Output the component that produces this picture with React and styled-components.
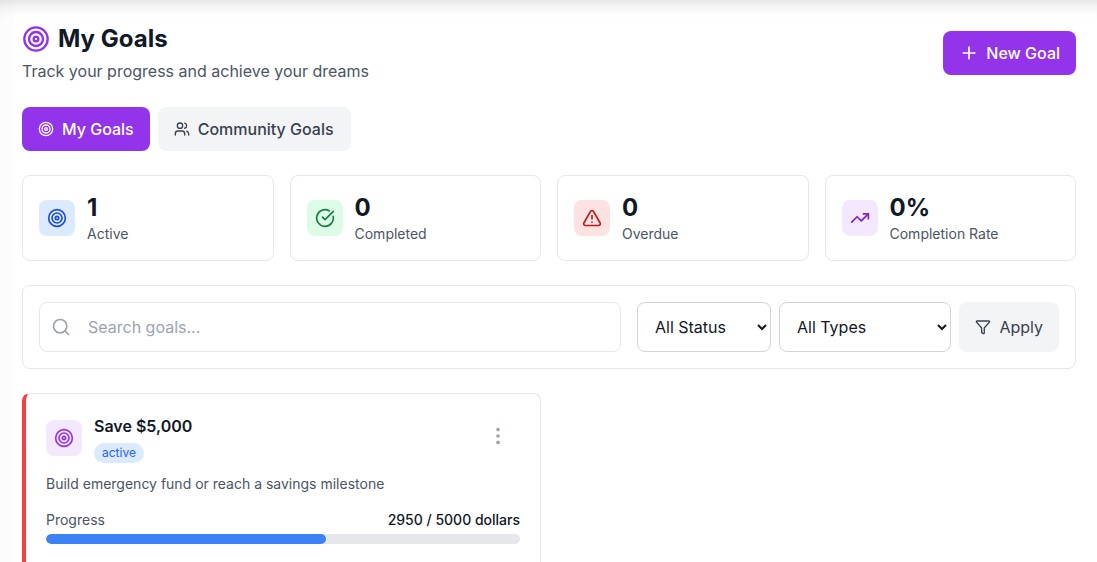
import React from 'react';
import styled, { createGlobalStyle } from 'styled-components';
import { Target, Plus, Users, CircleCheckBig, TriangleAlert, TrendingUp, Search, Filter, EllipsisVertical } from 'lucide-react';

const Global = createGlobalStyle`
  * { box-sizing: border-box; }
  html, body { margin: 0; height: 562px; overflow: hidden; background: #fff; }
  body { font-family: Inter, "Liberation Sans", sans-serif; color: #111827; }
`;

const Page = styled.div`
  height: 562px;
  overflow: hidden;
  position: relative;
  background: linear-gradient(90deg, #fbfbfb, #fdfdfd 14px, #fff 16px);
  padding: 12px 0 0 14px;
  &::before {
    content: '';
    position: absolute;
    z-index: 2;
    left: 0; right: 0; top: 0; height: 20px;
    background: linear-gradient(rgba(0,0,0,0.09), rgba(0,0,0,0.035) 40%, rgba(0,0,0,0.01) 70%, rgba(0,0,0,0));
  }
`;

const Main = styled.main`
  background: #fff;
  height: 100%;
  padding: 13px 21px 0 8px;
  position: relative;
`;

const Header = styled.header`
  display: flex;
  justify-content: space-between;
  align-items: flex-start;
  margin-bottom: 24px;
`;

const TitleRow = styled.h1`
  display: flex;
  align-items: center;
  gap: 8px;
  margin: 0 0 6px;
  font-size: 24px;
  line-height: 28px;
  font-weight: 700;
  color: #111827;
  svg { color: #9333ea; }
`;

const Subtitle = styled.p`
  margin: 0;
  font-size: 16px;
  line-height: 24px;
  color: #4b5563;
`;

const Button = styled.button`
  display: inline-flex;
  align-items: center;
  border: 0;
  font-family: inherit;
  font-weight: 500;
  font-size: 16px;
  white-space: nowrap;
  border-radius: 8px;
  height: 44px;
  padding: 0 16px;
  gap: 8px;
  background: ${p => (p.$primary ? '#9333ea' : '#f3f4f6')};
  color: ${p => (p.$primary ? '#ffffff' : '#374151')};
`;

const NewGoal = styled(Button)`
  margin-top: 6px;
  gap: 7px;
`;

const CommunityTab = styled(Button)`
  padding-right: 17px;
`;

const Tabs = styled.nav`
  display: flex;
  gap: 8px;
  margin-bottom: 24px;
`;

const Stats = styled.section`
  display: grid;
  grid-template-columns: repeat(4, 1fr);
  gap: 16px;
  margin-bottom: 24px;
`;

const StatCard = styled.div`
  display: flex;
  align-items: center;
  gap: 12px;
  height: 86px;
  padding: 0 16px;
  background: #fff;
  border: 1px solid #e5e7eb;
  border-radius: 8px;
`;

const IconBox = styled.div`
  width: 36px;
  height: 36px;
  flex: none;
  display: flex;
  align-items: center;
  justify-content: center;
  border-radius: 8px;
  background: ${p => p.$bg};
  color: ${p => p.$fg};
`;

const StatValue = styled.div`
  font-size: 24px;
  line-height: 32px;
  font-weight: 700;
  color: #111827;
`;

const StatLabel = styled.div`
  font-size: 14px;
  line-height: 20px;
  color: #4b5563;
`;

const FilterBar = styled.section`
  display: flex;
  gap: 8px;
  align-items: center;
  height: 84px;
  padding: 0 16px;
  border: 1px solid #e5e7eb;
  border-radius: 8px;
  margin-bottom: 24px;
`;

const SearchWrap = styled.div`
  flex: 1;
  position: relative;
  margin-right: 8px;
  height: 50px;
  svg {
    position: absolute;
    left: 12px;
    top: 15px;
    color: #9ca3af;
  }
`;

const SearchInput = styled.input`
  width: 100%;
  height: 100%;
  border: 1px solid #e5e7eb;
  border-radius: 8px;
  padding: 0 16px 0 48px;
  font-family: inherit;
  font-size: 16px;
  outline: none;
  &::placeholder { color: #9ca3af; opacity: 1; }
`;

const Select = styled.select`
  width: ${p => p.$w}px;
  height: 50px;
  border: 1px solid #d1d5db;
  border-radius: 8px;
  background: #fff;
  padding: 0 0 0 13px;
  font-family: inherit;
  font-size: 16px;
  color: #111827;
`;

const ApplyButton = styled(Button)`
  height: 50px;
  width: 100px;
  font-weight: 400;
  flex: none;
  gap: 8.5px;
`;

const GoalGrid = styled.section`
  display: grid;
  grid-template-columns: repeat(2, 1fr);
  gap: 16px;
`;

const GoalCard = styled.article`
  background: #fff;
  border: 1px solid #e5e7eb;
  border-left: 4px solid #f43f47;
  border-radius: 8px;
  padding: 26px 20px 20px 20px;
  height: 300px;
`;

const GoalHead = styled.div`
  display: flex;
  justify-content: space-between;
  align-items: flex-start;
  margin-bottom: 11px;
`;

const GoalLeft = styled.div`
  display: flex;
  gap: 12px;
  align-items: flex-start;
`;

const GoalTitle = styled.h3`
  margin: -6px 0 5px;
  font-size: 16px;
  line-height: 24px;
  font-weight: 600;
  color: #111827;
`;

const Badge = styled.span`
  display: block;
  width: fit-content;
  padding: 0 8px;
  border-radius: 9999px;
  background: #dbeafe;
  color: #2563eb;
  font-size: 12px;
  line-height: 20px;
`;

const MenuButton = styled.button`
  border: 0;
  background: none;
  padding: 0;
  margin: 5px 11px 0 0;
  color: #9ca3af;
  display: flex;
`;

const GoalDesc = styled.p`
  margin: 0 0 16px;
  font-size: 14px;
  line-height: 20px;
  color: #4b5563;
`;

const ProgressHead = styled.div`
  display: flex;
  justify-content: space-between;
  font-size: 14px;
  line-height: 20px;
  color: #4b5563;
  margin-bottom: 4px;
`;

const ProgressValue = styled.span`
  color: #111827;
  font-weight: 500;
`;

const Track = styled.div`
  height: 10px;
  border-radius: 9999px;
  background: #e5e7eb;
  overflow: hidden;
`;

const Fill = styled.div`
  height: 100%;
  border-radius: 9999px;
  background: #3b82f6;
`;

const stats = [
  { Icon: Target, bg: '#dbeafe', fg: '#1d4ed8', value: '1', label: 'Active' },
  { Icon: CircleCheckBig, bg: '#dcfce7', fg: '#15803d', value: '0', label: 'Completed' },
  { Icon: TriangleAlert, bg: '#fee2e2', fg: '#b91c1c', value: '0', label: 'Overdue' },
  { Icon: TrendingUp, bg: '#f3e8ff', fg: '#7e22ce', value: '0%', label: 'Completion Rate' },
];

export default function App() {
  return (
    <Page>
      <Global />
      <Main>
        <Header>
          <div>
            <TitleRow><Target size={28} strokeWidth={2} />My Goals</TitleRow>
            <Subtitle>Track your progress and achieve your dreams</Subtitle>
          </div>
          <NewGoal $primary><Plus size={20} />New Goal</NewGoal>
        </Header>
        <Tabs>
          <Button $primary><Target size={16} />My Goals</Button>
          <CommunityTab><Users size={16} />Community Goals</CommunityTab>
        </Tabs>
        <Stats>
          {stats.map(({ Icon, bg, fg, value, label }) => (
            <StatCard key={label}>
              <IconBox $bg={bg} $fg={fg}><Icon size={20} /></IconBox>
              <div>
                <StatValue>{value}</StatValue>
                <StatLabel>{label}</StatLabel>
              </div>
            </StatCard>
          ))}
        </Stats>
        <FilterBar>
          <SearchWrap>
            <Search size={20} />
            <SearchInput placeholder="Search goals..." />
          </SearchWrap>
          <Select $w={134}><option>All Status</option></Select>
          <Select $w={172}><option>All Types</option></Select>
          <ApplyButton><Filter size={16} />Apply</ApplyButton>
        </FilterBar>
        <GoalGrid>
          <GoalCard>
            <GoalHead>
              <GoalLeft>
                <IconBox $bg="#f3e8ff" $fg="#9333ea"><Target size={20} /></IconBox>
                <div>
                  <GoalTitle>Save $5,000</GoalTitle>
                  <Badge>active</Badge>
                </div>
              </GoalLeft>
              <MenuButton><EllipsisVertical size={22} /></MenuButton>
            </GoalHead>
            <GoalDesc>Build emergency fund or reach a savings milestone</GoalDesc>
            <ProgressHead>
              <span>Progress</span>
              <ProgressValue>2950 / 5000 dollars</ProgressValue>
            </ProgressHead>
            <Track><Fill style={{ width: `${(2950 / 5000) * 100}%` }} /></Track>
          </GoalCard>
        </GoalGrid>
      </Main>
    </Page>
  );
}
